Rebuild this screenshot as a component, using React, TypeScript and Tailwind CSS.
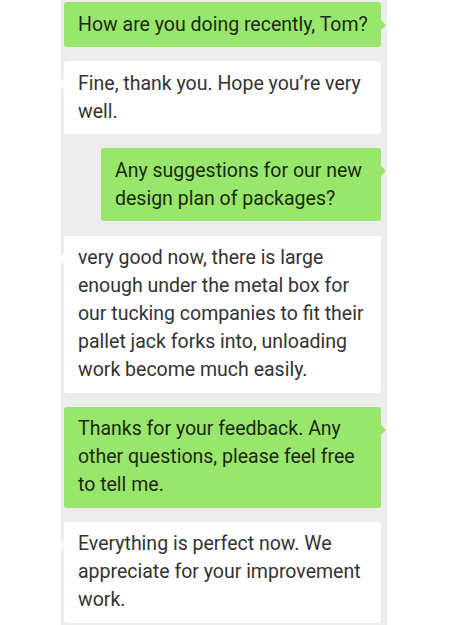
import React from "react";

type Msg = { me: boolean; text: string; w?: string };

const msgs: Msg[] = [
  { me: true, text: "How are you doing recently, Tom?" },
  { me: false, text: "Fine, thank you. Hope you’re very well." },
  { me: true, text: "Any suggestions for our new design plan of packages?", w: "narrow" },
  {
    me: false,
    text: "very good now, there is large enough under the metal box for our tucking companies to fit their pallet jack forks into, unloading work become much easily.",
  },
  { me: true, text: "Thanks for your feedback. Any other questions, please feel free to tell me." },
  { me: false, text: "Everything is perfect now. We appreciate for your improvement work." },
];

function Bubble({ m }: { m: Msg }) {
  const base =
    "relative rounded-[3px] pl-[14px] pr-[12px] py-[8.5px] text-[19.5px] leading-[28px]";
  if (m.me) {
    return (
      <div className={m.w === "narrow" ? "flex justify-end" : "flex"}>
        <div
          className={
            base +
            " bg-[#98e66b] text-[#1c2a14] " +
            (m.w === "narrow" ? "w-[280px]" : "w-[317px]")
          }
        >
          {m.text}
          <span className="absolute right-[-5px] top-[18px] w-0 h-0 border-y-[5px] border-y-transparent border-l-[5px] border-l-[#98e66b]" />
        </div>
      </div>
    );
  }
  return (
    <div className="flex">
      <div className={base + " bg-white text-[#333333] w-[317px]"}>
        {m.text}
        <span className="absolute left-[-5px] top-[18px] w-0 h-0 border-y-[5px] border-y-transparent border-r-[5px] border-r-white" />
      </div>
    </div>
  );
}

export default function App() {
  return (
    <div
      className="w-[450px] h-[625px] bg-white overflow-hidden"
      style={{ fontFamily: "Roboto, 'Noto Sans', sans-serif" }}
    >
      <div className="ml-[61px] w-[326px] h-[625px] bg-[#ededed] pl-[3px] pr-[6px] pt-[2px] flex flex-col gap-[14.2px]">
        {msgs.map((m, i) => (
          <Bubble key={i} m={m} />
        ))}
      </div>
    </div>
  );
}
